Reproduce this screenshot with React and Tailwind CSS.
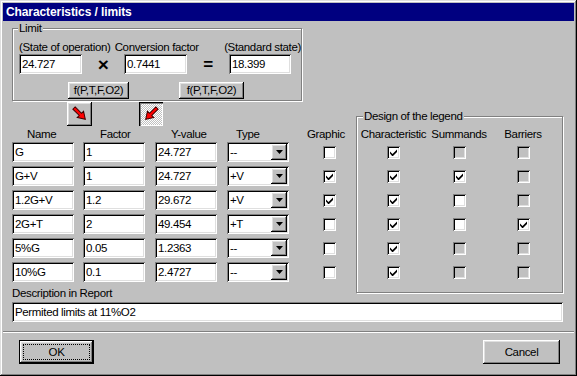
const raised =
  'shadow-[inset_-1px_-1px_#000000,inset_1px_1px_#ffffff,inset_-2px_-2px_#808080,inset_2px_2px_#dfdfdf]';
const sunken =
  'shadow-[inset_1px_1px_#808080,inset_-1px_-1px_#ffffff,inset_2px_2px_#000000,inset_-2px_-2px_#dfdfdf]';

const rows = [
  { name: 'G', factor: '1', y: '24.727', type: '--', graphic: false, legend: [[true, false], [false, true], [false, true]] },
  { name: 'G+V', factor: '1', y: '24.727', type: '+V', graphic: true, legend: [[true, false], [true, false], [false, true]] },
  { name: '1.2G+V', factor: '1.2', y: '29.672', type: '+V', graphic: true, legend: [[true, false], [false, false], [false, true]] },
  { name: '2G+T', factor: '2', y: '49.454', type: '+T', graphic: false, legend: [[true, false], [false, false], [true, false]] },
  { name: '5%G', factor: '0.05', y: '1.2363', type: '--', graphic: false, legend: [[true, false], [false, true], [false, true]] },
  { name: '10%G', factor: '0.1', y: '2.4727', type: '--', graphic: false, legend: [[true, false], [false, true], [false, true]] },
];

const Field = ({ w, children }) => (
  <div className={`h-[20px] bg-white p-[2px] flex items-center ${sunken} ${w}`}>
    <span className="pl-[1px] whitespace-nowrap">{children}</span>
  </div>
);

const Combo = ({ value }) => (
  <div className={`h-[20px] w-[62px] bg-white p-[2px] flex items-center ${sunken}`}>
    <span className="pl-[1px] flex-1 whitespace-nowrap">{value}</span>
    <div className={`w-[16px] h-[16px] bg-[#c0c0c0] flex items-center justify-center ${raised}`}>
      <svg width="7" height="4" viewBox="0 0 7 4">
        <polygon points="0,0 7,0 3.5,4" fill="#000" />
      </svg>
    </div>
  </div>
);

const Check = ({ checked, disabled }) => (
  <div
    className={`w-[13px] h-[13px] flex items-center justify-center ${sunken} ${
      disabled ? 'bg-[#c0c0c0]' : 'bg-white'
    }`}
  >
    {checked && (
      <svg width="7" height="7" viewBox="0 0 7 7">
        <polygon points="0,2.5 2.5,5 7,0.5 7,3 2.5,7.5 0,4.5" fill="#000" />
      </svg>
    )}
  </div>
);

const Arrow = ({ dir }) => (
  <svg width="18" height="18" viewBox="0 0 18 18">
    <g transform={dir === 'right' ? 'translate(3 3) rotate(45)' : 'translate(15 3) rotate(135)'}>
      <polygon
        points="0,-1.6 9,-1.6 9,-4.5 16,0 9,4.5 9,1.6 0,1.6"
        fill="#ff0000"
        stroke="#400000"
        strokeWidth="1"
        strokeLinejoin="miter"
      />
    </g>
  </svg>
);

export default function App() {
  return (
    <div
      className={`w-[577px] h-[376px] bg-[#c0c0c0] p-[3px] flex flex-col text-[11.5px] leading-[13px] tracking-[-0.35px] text-black font-['Liberation_Sans',Arial,sans-serif] shadow-[inset_-1px_-1px_#000000,inset_1px_1px_#dfdfdf,inset_-2px_-2px_#808080,inset_2px_2px_#ffffff]`}
    >
      {/* Title bar */}
      <div className="h-[18px] bg-[#000080] flex items-center pl-[3px] text-white font-bold text-[12px] tracking-[-0.1px]">
        Characteristics / limits
      </div>

      <div className="pl-[9px] pr-[11px] flex flex-col">
        {/* Limit group */}
        <div className="relative mt-[7px] w-[290px] h-[73px] border border-[#808080] shadow-[inset_1px_1px_#ffffff,1px_1px_#ffffff] pt-[12px]">
          <span className="absolute top-[-7px] left-[5px] bg-[#c0c0c0] px-[1px]">Limit</span>
          <div className="flex h-[13px] pl-[6px] whitespace-nowrap">
            <span className="w-[97px]">(State of operation)</span>
            <span className="w-[111px]">Conversion factor</span>
            <span>(Standard state)</span>
          </div>
          <div className="flex pl-[6px]">
            <Field w="w-[63px]">24.727</Field>
            <div className="w-[42px] flex items-center justify-center text-[19px] font-bold">×</div>
            <Field w="w-[63px]">0.7441</Field>
            <div className="w-[42px] flex items-center justify-center text-[17px] font-bold">=</div>
            <Field w="w-[62px]">18.399</Field>
          </div>
          <div className="flex mt-[8px]">
            <button className={`ml-[55px] w-[61px] h-[17px] flex items-center justify-center ${raised}`}>f(P,T,F,O2)</button>
            <button className={`ml-[50px] w-[65px] h-[17px] flex items-center justify-center ${raised}`}>f(P,T,F,O2)</button>
          </div>
        </div>

        {/* Middle */}
        <div className="flex mt-[1px]">
          <div className="w-[339px] flex flex-col">
            <div className="flex h-[24px]">
              <button className={`ml-[55px] w-[25px] h-[24px] flex items-center justify-center ${raised}`}>
                <Arrow dir="right" />
              </button>
              <button
                className={`ml-[47px] w-[24px] h-[24px] flex items-center justify-center bg-[repeating-conic-gradient(#ffffff_0_25%,#c0c0c0_0_50%)] bg-[length:2px_2px] shadow-[inset_1px_1px_#000000,inset_2px_2px_#808080,inset_-1px_-1px_#ffffff]`}
              >
                <Arrow dir="left" />
              </button>
            </div>
            <div className="flex h-[14px] mt-[1px] pl-[15px] items-center">
              <span className="w-[73px]">Name</span>
              <span className="w-[71px]">Factor</span>
              <span className="w-[65px]">Y-value</span>
              <span className="w-[71px]">Type</span>
              <span>Graphic</span>
            </div>
            <div className="flex flex-col gap-[4px] mt-[1px]">
              {rows.map((r) => (
                <div key={r.name} className="flex h-[20px] items-center">
                  <Field w="w-[62px]">{r.name}</Field>
                  <div className="ml-[9px]">
                    <Field w="w-[62px]">{r.factor}</Field>
                  </div>
                  <div className="ml-[10px]">
                    <Field w="w-[62px]">{r.y}</Field>
                  </div>
                  <div className="ml-[10px]">
                    <Combo value={r.type} />
                  </div>
                  <div className="ml-[34px]">
                    <Check checked={r.graphic} />
                  </div>
                </div>
              ))}
            </div>
            <div className="mt-[5px] h-[13px]">Description in Report</div>
          </div>

          {/* Legend group */}
          <div className="relative ml-[5px] mt-[14px] w-[207px] h-[177px] border border-[#808080] shadow-[inset_1px_1px_#ffffff,1px_1px_#ffffff] pt-[10px]">
            <span className="absolute top-[-7px] left-[6px] bg-[#c0c0c0] px-[1px]">Design of the legend</span>
            <div className="flex h-[14px] items-center whitespace-nowrap">
              <span className="w-[73px] text-center">Characteristic</span>
              <span className="w-[58px] text-center">Summands</span>
              <span className="w-[70px] text-center">Barriers</span>
            </div>
            <div className="flex flex-col gap-[4px] mt-[1px]">
              {rows.map((r) => (
                <div key={r.name} className="flex h-[20px] items-center">
                  {r.legend.map(([c, d], i) => (
                    <div
                      key={i}
                      className={`flex justify-center ${i === 0 ? 'w-[73px]' : i === 1 ? 'w-[58px]' : 'w-[70px]'}`}
                    >
                      <Check checked={c} disabled={d} />
                    </div>
                  ))}
                </div>
              ))}
            </div>
          </div>
        </div>

        <div className="mt-[2px]">
          <Field w="w-full">Permited limits at 11%O2</Field>
        </div>
      </div>

      {/* Separator */}
      <div className="mt-[9px] h-[2px] border-t border-b border-t-[#808080] border-b-white" />

      {/* Buttons */}
      <div className="flex justify-between mt-[7px] pl-[16px] pr-[14px]">
        <button className="w-[75px] h-[24px] border border-black flex">
          <div className={`flex-1 p-[3px] flex ${raised}`}>
            <span className="flex-1 flex items-center justify-center border border-dotted border-black">OK</span>
          </div>
        </button>
        <button className={`w-[77px] h-[24px] flex items-center justify-center ${raised}`}>Cancel</button>
      </div>
    </div>
  );
}
